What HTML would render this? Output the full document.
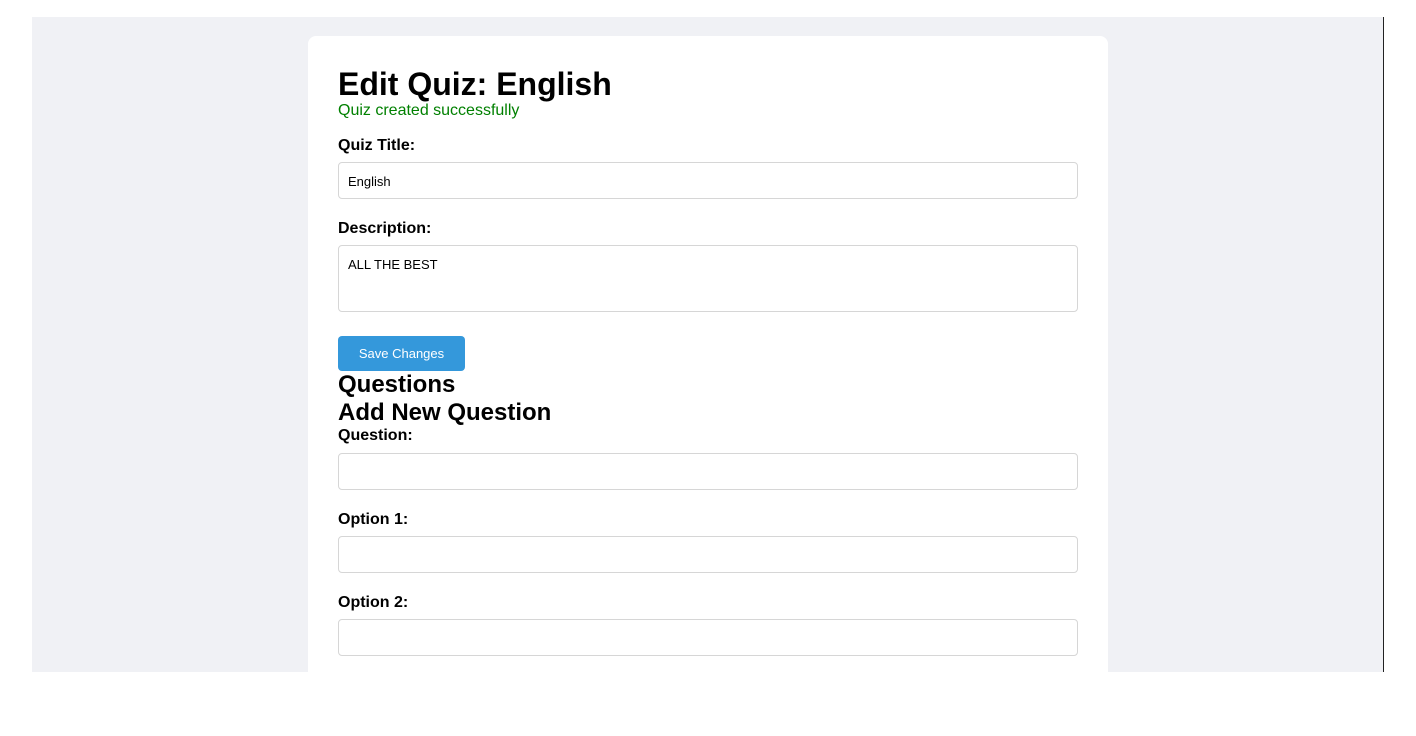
<!DOCTYPE html>
<html><head><style>
body{margin:0;width:1416px;height:672px;overflow:hidden;background:#fff;font-family:"Liberation Sans",Arial,sans-serif;position:relative}
.bg{position:absolute;left:32px;top:17px;width:1351px;height:655px;background:#f0f1f5}
.line{position:absolute;left:1383px;top:17px;width:1px;height:655px;background:#222}
.card{position:absolute;left:308px;top:36px;width:800px;height:700px;background:#fff;border-radius:8px}
.a{position:absolute;left:338px;white-space:nowrap;line-height:1}
.lbl{font-weight:bold;font-size:16px;color:#000}
.in{position:absolute;left:338px;width:738px;height:35px;border:1px solid #d6d6d6;border-radius:4px;background:#fff;font-size:13px;box-sizing:content-box}
.in span{position:absolute;left:9px;top:11px}
</style></head><body>
<div class="bg"></div><div class="line"></div><div class="card"></div>
<div class="a" style="top:68px;font-size:32px;font-weight:bold">Edit Quiz: English</div>
<div class="a" style="top:103px;font-size:16px;color:#008000">Quiz created successfully</div>
<div class="a lbl" style="top:138px">Quiz Title:</div>
<div class="in" style="top:162px"><span>English</span></div>
<div class="a lbl" style="top:221px">Description:</div>
<div class="in" style="top:245px;height:65px"><span style="top:11px">ALL THE BEST</span></div>
<div style="position:absolute;left:338px;top:336px;width:127px;height:35px;background:#3498db;border-radius:4px;color:#fff;font-size:13px;text-align:center;line-height:35px">Save Changes</div>
<div class="a" style="top:373px;font-size:24px;font-weight:bold">Questions</div>
<div class="a" style="top:401px;font-size:24px;font-weight:bold">Add New Question</div>
<div class="a lbl" style="top:428px">Question:</div>
<div class="in" style="top:453px"></div>
<div class="a lbl" style="top:512px">Option 1:</div>
<div class="in" style="top:536px"></div>
<div class="a lbl" style="top:595px">Option 2:</div>
<div class="in" style="top:619px"></div>
</body></html>
